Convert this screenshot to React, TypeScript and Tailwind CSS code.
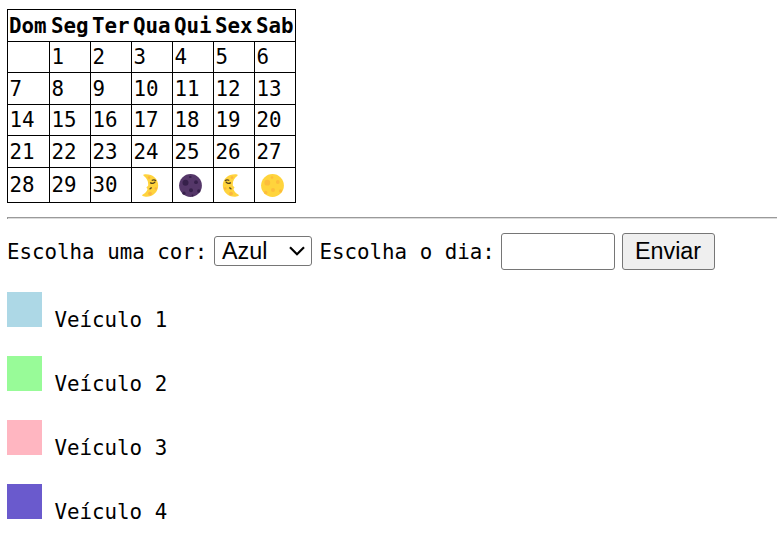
import React from "react";

type Cell = string | React.ReactNode;

function Crescent({ mirrored = false }: { mirrored?: boolean }) {
  return (
    <svg viewBox="0 0 23 23" className={mirrored ? "block size-[23px] -scale-x-100" : "block size-[23px]"}>
      <path
        d="M6.800.3C14.500-.2 20.200 4.700 20.200 11.500S14.500 23 7.800 22.700C6.200 22.600 4.700 22.200 4.200 21.500C3.900 20.900 4.400 20.600 5.200 20.200C7.400 19 9 17 9.600 14.900L8.500 13.800C8.500 13.100 9.500 12.500 10.100 11.700C10.600 8 9.200 4.500 5.900 2.100C5 1.300 5.300.500 6.800.300Z"
        fill="#ffd33d"
      />
      <circle cx="12" cy="19.600" r="1.900" fill="#fbb540" />
      <circle cx="17.800" cy="14.500" r="1.300" fill="#fbb540" />
      <circle cx="11" cy="3.600" r="1.300" fill="#fbb540" />
      <g fill="none" stroke="#50401f" strokeWidth="1.250" strokeLinecap="round">
        <path d="M12.500 8.900c1.500.9 3.200.6 4.400-.8M14.200 6.300c1.300-.7 2.500-.6 3.400.2" />
        <path d="M12 14.900c.5-.8 1.200-1.200 1.500-1" />
      </g>
    </svg>
  );
}

function NewMoon() {
  return (
    <svg viewBox="0 0 23 23" className="block size-[23px]">
      <circle cx="11.500" cy="11.500" r="11.400" fill="#553769" />
      <g fill="#36204a">
        <circle cx="6.500" cy="8.800" r="3" />
        <circle cx="17" cy="8.200" r="1.900" />
        <circle cx="12" cy="16.300" r="2" />
        <circle cx="19.800" cy="17" r="1.700" />
        <ellipse cx="11.300" cy="3" rx="1.400" ry="1" />
        <circle cx="5" cy="19.200" r="1.600" />
        <circle cx="13.500" cy="21.500" r="1" />
      </g>
    </svg>
  );
}

function FullMoon() {
  return (
    <svg viewBox="0 0 23 23" className="block size-[23px]">
      <circle cx="11.500" cy="11.500" r="11.400" fill="#ffd43c" />
      <g fill="#fdbd3b">
        <circle cx="6.300" cy="8.700" r="2.900" />
        <circle cx="16.800" cy="8" r="1.900" />
        <circle cx="12" cy="16" r="2" />
        <circle cx="19.500" cy="17" r="1.700" />
        <circle cx="11" cy="3.500" r="1.300" />
        <circle cx="4.700" cy="18.500" r="1.700" />
      </g>
    </svg>
  );
}

const days = ["Dom", "Seg", "Ter", "Qua", "Qui", "Sex", "Sab"];

const weeks: { height: string; cells: Cell[] }[] = [
  { height: "h-[31px]", cells: ["", "1", "2", "3", "4", "5", "6"] },
  { height: "h-[32px]", cells: ["7", "8", "9", "10", "11", "12", "13"] },
  { height: "h-[31px]", cells: ["14", "15", "16", "17", "18", "19", "20"] },
  { height: "h-[32px]", cells: ["21", "22", "23", "24", "25", "26", "27"] },
  { height: "h-[35px]", cells: ["28", "29", "30", <Crescent />, <NewMoon />, <Crescent mirrored />, <FullMoon />] },
];

const vehicles = [
  { name: "Veículo 1", color: "bg-[#add8e6]" },
  { name: "Veículo 2", color: "bg-[#98fb98]" },
  { name: "Veículo 3", color: "bg-[#ffb6c1]" },
  { name: "Veículo 4", color: "bg-[#6a5acd]" },
];

export default function App() {
  return (
    <main className="h-[548px] overflow-hidden bg-white pt-[9px] pl-[7px] font-['DejaVu_Sans_Mono',monospace] text-[20.8px] leading-[28px] text-black">
      <table className="w-[289px] table-fixed border-separate border-spacing-0 border-t border-l border-black">
        <colgroup>
          <col className="w-[42px]" />
          {days.slice(1).map((d) => (
            <col key={d} className="w-[41px]" />
          ))}
        </colgroup>
        <thead>
          <tr className="h-[32px]">
            {days.map((d) => (
              <th
                key={d}
                className="border-b border-black p-0 pl-[1px] text-left align-middle font-bold last:border-r"
              >
                <div className="w-[38px] whitespace-nowrap">{d}</div>
              </th>
            ))}
          </tr>
        </thead>
        <tbody>
          {weeks.map((week, w) => (
            <tr key={w} className={week.height}>
              {week.cells.map((cell, i) => (
                <td key={i} className="border-r border-b border-black p-0 pl-[1.500px] align-middle">
                  {typeof cell === "string" ? cell : <div className="pt-[1px] pl-[4px]">{cell}</div>}
                </td>
              ))}
            </tr>
          ))}
        </tbody>
      </table>

      <hr className="mt-[14px] h-[2px] border-0 border-t border-l border-[#9a9a9a] bg-[#dcdcdc]" />

      <form className="mt-[14px] flex h-[37px] items-center" onSubmit={(e) => e.preventDefault()}>
        <label className="w-[207px] whitespace-nowrap">Escolha uma cor:</label>
        <div className="mb-[1px] flex h-[30px] w-[98px] items-center justify-between rounded-[3px] border border-[#767676] pr-[6px] pl-[7px] font-['Liberation_Sans',Arial,sans-serif] text-[23.330px]">
          <span>Azul</span>
          <svg viewBox="0 0 16 10" className="h-[10px] w-[16px]" fill="none" stroke="#000" strokeWidth="2.200">
            <path d="M1 1.200l7 7 7-7" />
          </svg>
        </div>
        <label className="ml-[7.500px] w-[181.500px] whitespace-nowrap">Escolha o dia:</label>
        <input className="h-[37px] w-[114px] rounded-[3px] border border-[#767676] bg-white px-1" />
        <button className="ml-[7px] h-[37px] w-[93px] rounded-[3px] border border-[#767676] bg-[#efefef] pr-[1px] pb-[2px] font-['Liberation_Sans',Arial,sans-serif] text-[23.330px]">
          Enviar
        </button>
      </form>

      <ul className="mt-[22px] flex flex-col gap-[29px]">
        {vehicles.map((v) => (
          <li key={v.name} className="flex h-[35px] items-baseline gap-[12.500px]">
            <span className={`inline-block size-[35px] ${v.color}`} />
            <span>{v.name}</span>
          </li>
        ))}
      </ul>
    </main>
  );
}
